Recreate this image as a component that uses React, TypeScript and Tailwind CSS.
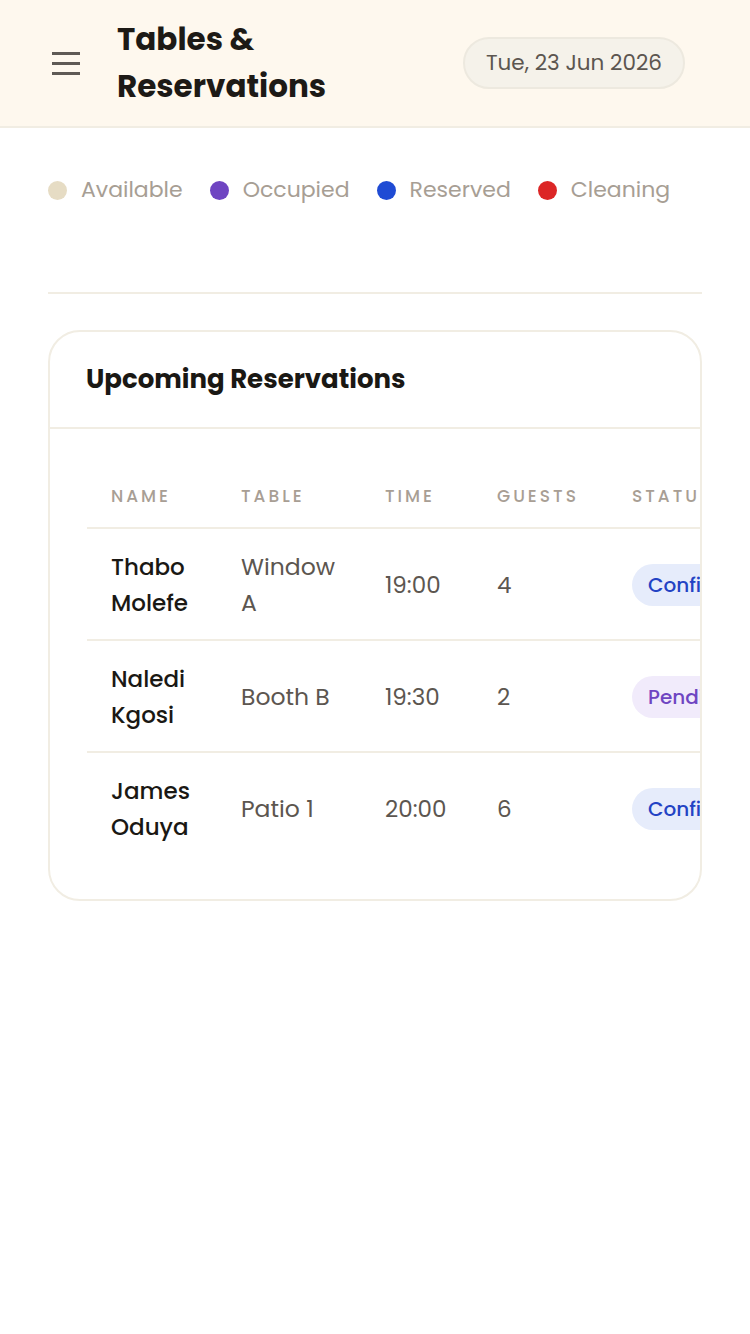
import React from "react";

const rows = [
  { name: ["Thabo", "Molefe"], table: ["Window", "A"], time: "19:00", guests: 4, status: "Confirmed" },
  { name: ["Naledi", "Kgosi"], table: ["Booth B"], time: "19:30", guests: 2, status: "Pending" },
  { name: ["James", "Oduya"], table: ["Patio 1"], time: "20:00", guests: 6, status: "Confirmed" },
];

const legend = [
  { label: "Available", dot: "bg-[#e6dcc4]" },
  { label: "Occupied", dot: "bg-[#6f45c2]" },
  { label: "Reserved", dot: "bg-[#1f4bd4]" },
  { label: "Cleaning", dot: "bg-[#dc2626]" },
];

const colWidths = ["w-[130px]", "w-[144px]", "w-[112px]", "w-[135px]", ""];

export default function App() {
  return (
    <div className="min-h-[1334px] bg-white font-['Poppins','DejaVu_Sans',sans-serif]">
      <header className="h-[128px] bg-[#fef8ee] border-b-2 border-[#f1ede3] flex items-center pl-[52px] pr-[65px]">
        <div className="flex flex-col gap-[7px] w-[28px]">
          <span className="block h-[3px] bg-[#5f5a55]" />
          <span className="block h-[3px] bg-[#5f5a55]" />
          <span className="block h-[3px] bg-[#5f5a55]" />
        </div>
        <h1 className="ml-[37px] text-[31px] leading-[47px] font-bold text-[#1d1a16] w-[250px]">
          Tables &amp; Reservations
        </h1>
        <div className="ml-auto h-[52px] px-[21px] rounded-full bg-[#f5f2ea] border-2 border-[#ede9df] flex items-center text-[21.5px] text-[#5c5650]">
          Tue, 23 Jun 2026
        </div>
      </header>

      <main className="px-[48px]">
        <div className="h-[164px] pt-[46px]">
          <div className="flex items-center gap-[27px]">
            {legend.map((l) => (
              <div key={l.label} className="flex items-center gap-[14px]">
                <span className={`w-[19px] h-[19px] rounded-full ${l.dot}`} />
                <span className="text-[22px] leading-[32px] text-[#a79e94]">{l.label}</span>
              </div>
            ))}
          </div>
        </div>

        <div className="border-t-2 border-[#f1ede3]" />

        <section className="mt-[36px] rounded-[32px] border-2 border-[#f1ede3] overflow-hidden">
          <div className="h-[97px] flex items-center px-[36px] border-b-2 border-[#f1ede3]">
            <h2 className="text-[26px] font-bold text-[#1a1814]">Upcoming Reservations</h2>
          </div>
          <div className="pl-[37px] pt-[54px] pb-[36px] overflow-hidden">
            <table className="border-collapse text-left w-[780px]">
              <thead>
                <tr className="border-b-2 border-[#f1ede3]">
                  {["Name", "Table", "Time", "Guests", "Status"].map((h, i) => (
                    <th
                      key={h}
                      className={`pl-[24px] pb-[18px] text-[17px] leading-[26px] font-medium uppercase tracking-[3px] text-[#a89e94] ${colWidths[i]}`}
                    >
                      {h}
                    </th>
                  ))}
                </tr>
              </thead>
              <tbody>
                {rows.map((r, idx) => (
                  <tr key={r.time} className={idx < rows.length - 1 ? "border-b-2 border-[#f1ede3]" : ""}>
                    <td className="pl-[24px] pt-[20px] pb-[18px] text-[23px] leading-[36px] text-[#1a1814] font-medium">
                      {r.name.map((w) => (
                        <div key={w}>{w}</div>
                      ))}
                    </td>
                    <td className="pl-[24px] pt-[20px] pb-[18px] text-[23.5px] leading-[36px] text-[#5c5650]">
                      {r.table.map((w) => (
                        <div key={w}>{w}</div>
                      ))}
                    </td>
                    <td className="pl-[24px] pt-[20px] pb-[18px] text-[23px] leading-[36px] text-[#5c5650]">{r.time}</td>
                    <td className="pl-[24px] pt-[20px] pb-[18px] text-[23px] leading-[36px] text-[#5c5650]">{r.guests}</td>
                    <td className="pl-[24px] pt-[20px] pb-[18px]">
                      <span
                        className={`inline-flex items-center h-[42px] px-[16px] rounded-full text-[20px] font-medium whitespace-nowrap ${
                          r.status === "Pending" ? "bg-[#f1ebfb] text-[#6f45c2]" : "bg-[#e6ecfb] text-[#2343c4]"
                        }`}
                      >
                        {r.status}
                      </span>
                    </td>
                  </tr>
                ))}
              </tbody>
            </table>
          </div>
        </section>
      </main>
    </div>
  );
}
